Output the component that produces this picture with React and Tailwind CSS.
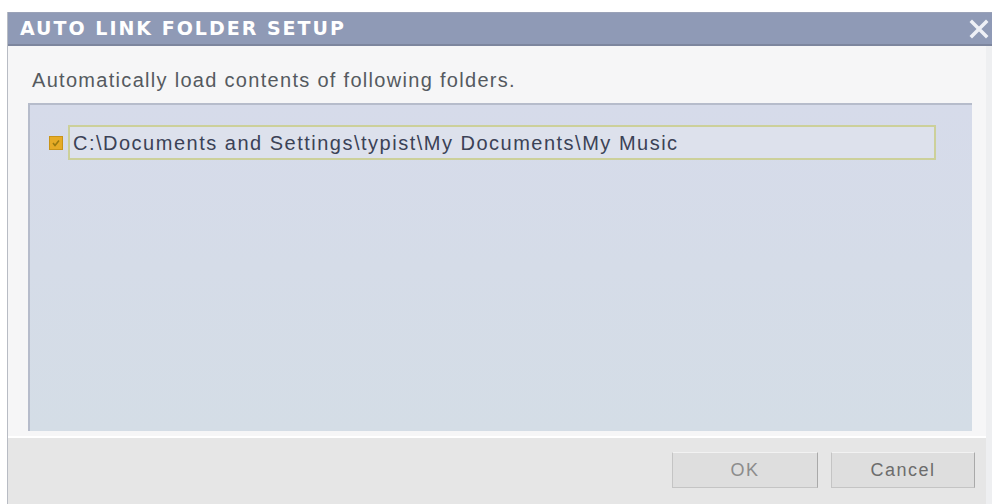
export default function App() {
  return (
    <div className="w-[992px] h-[504px] bg-white pt-[12px] pl-[7px] overflow-hidden" style={{ fontFamily: '"Liberation Sans", Arial, sans-serif' }}>
      <div className="w-[985px] h-[492px] flex flex-col border-l border-[#b8bcc4]">
        {/* Title bar */}
        <div className="h-[34px] shrink-0 bg-[#8f9ab6] border-t border-[#9aa2b8] border-b-2 border-b-[#7d869e] flex items-center justify-between pl-[12px] pr-[2px]">
          <span className="text-white font-bold text-[19px] tracking-[2px] font-['DejaVu_Sans',sans-serif]">AUTO LINK FOLDER SETUP</span>
          <svg width="20" height="20" viewBox="0 0 20 20" className="mr-[1px]">
            <path d="M3 3 L17 17 M17 3 L3 17" stroke="#eef0f6" strokeWidth="3.5" strokeLinecap="square" />
          </svg>
        </div>

        {/* Body */}
        <div className="flex-1 flex flex-col bg-[#f6f6f7] border-r-[6px] border-r-[#eeeff1]">
          <div className="h-[57px] pl-[24px] pb-[8px] flex items-end text-[20px] tracking-[1.3px] text-[#555a60]">
            Automatically load contents of following folders.
          </div>
          <div className="ml-[20px] mr-[14px] h-[328px] bg-gradient-to-b from-[#d6dbea] to-[#d4dde6] border-t-2 border-l-2 border-[#b6bccb] pt-[20px] pl-[19px] pr-[36px]">
            <div className="flex items-center">
              <div className="w-[14px] h-[14px] bg-[#e6ab26] border border-[#c99418] flex items-center justify-center">
                <svg width="10" height="10" viewBox="0 0 10 10">
                  <path d="M2 5 L4 7.5 L8 2.5" stroke="#9a7a10" strokeWidth="1.6" fill="none" />
                </svg>
              </div>
              <div className="ml-[5px] flex-1 h-[35px] border-2 border-[#ccd09a] bg-[#dde1ec] flex items-center pl-[3px] text-[20px] tracking-[1.5px] text-[#3b4256]">
                C:\Documents and Settings\typist\My Documents\My Music
              </div>
            </div>
          </div>
          <div className="mt-[5px] flex-1 bg-[#e6e6e6] border-t-2 border-white flex justify-end items-start pt-[14px] pr-[11px] gap-[13px]">
            <button className="w-[146px] h-[36px] bg-[#dedede] border border-[#c4c4c4] border-t-[#f2f2f2] border-r-[#a9a9a9] text-[18px] tracking-[1.5px] text-[#8c8c8c]">
              OK
            </button>
            <button className="w-[144px] h-[36px] bg-[#dedede] border border-[#c4c4c4] border-t-[#f2f2f2] border-r-[#a9a9a9] text-[18px] tracking-[1.5px] text-[#6c6c6c]">
              Cancel
            </button>
          </div>
        </div>
      </div>
    </div>
  );
}
